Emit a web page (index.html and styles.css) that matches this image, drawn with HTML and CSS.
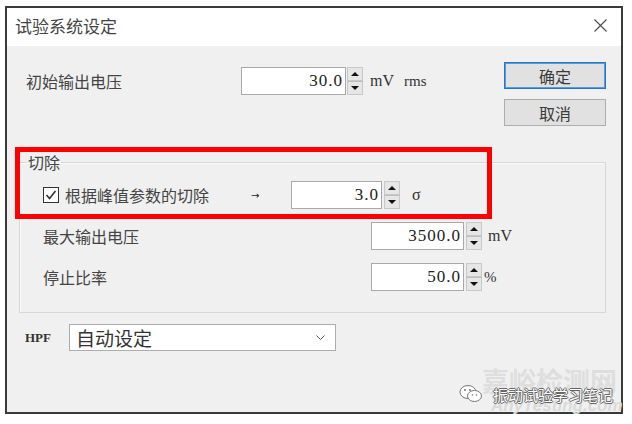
FILE: index.html
```html
<!doctype html>
<html lang="zh">
<head>
    <meta charset="utf-8">
    <title>试验系统设定</title>
    <link rel="stylesheet" href="styles.css">
</head>
<body>
    <div class="dialog">
        <div class="titlebar">
            <span class="title">试验系统设定</span>
            <svg class="close" width="13" height="13" viewBox="0 0 13 13"><path d="M0.5 0.5 L12.5 12.5 M12.5 0.5 L0.5 12.5" stroke="#4a4a4a" stroke-width="1.1" fill="none"/></svg>
        </div>

        <div class="content">
            <div class="top">
                <div class="row first">
                    <span class="label w-first">初始输出电压</span>
                    <span class="num w-first-num">30.0</span>
                    <span class="spin"><span class="up"></span><span class="down"></span></span>
                    <span class="unit">mV</span>
                    <span class="unit small">rms</span>
                </div>
                <div class="buttons">
                    <button type="button" class="btn default">确定</button>
                    <button type="button" class="btn">取消</button>
                </div>
            </div>

            <fieldset class="group">
                <legend>切除</legend>
                <div class="row">
                    <span class="lead">
                        <span class="chk"><svg width="14" height="14" viewBox="0 0 14 14"><polyline points="2.5,7 5.5,10.5 11.5,3" stroke="#333" stroke-width="1.6" fill="none"/></svg></span>
                        <span class="label chk-text">根据峰值参数的切除</span>
                        <span class="arrow">→</span>
                    </span>
                    <span class="num w-sigma">3.0</span>
                    <span class="spin gap2"><span class="up"></span><span class="down"></span></span>
                    <span class="unit sigma">σ</span>
                </div>
                <div class="row">
                    <span class="label w-inner">最大输出电压</span>
                    <span class="num w-inner-num">3500.0</span>
                    <span class="spin gap2"><span class="up"></span><span class="down"></span></span>
                    <span class="unit mv">mV</span>
                </div>
                <div class="row">
                    <span class="label w-inner">停止比率</span>
                    <span class="num w-inner-num">50.0</span>
                    <span class="spin gap2"><span class="up"></span><span class="down"></span></span>
                    <span class="unit pct">%</span>
                </div>
            </fieldset>

            <div class="row hpf">
                <span class="hpf-label">HPF</span>
                <span class="select">
                    <span>自动设定</span>
                    <svg width="9" height="5" viewBox="0 0 9 5"><polyline points="0.5,0.5 4.5,4.5 8.5,0.5" stroke="#555" stroke-width="1" fill="none"/></svg>
                </span>
            </div>
        </div>

        <!-- annotation -->
        <div class="mark"></div>

        <div class="watermark">
            <span class="wm-site">嘉峪检测网</span>
            <span class="wm-url">AnyTesting.com</span>
            <svg class="wm-icon" width="24" height="19" viewBox="0 0 24 19">
                <ellipse cx="9" cy="8" rx="8" ry="6.5" fill="#fff" stroke="#777" stroke-width="1"/>
                <ellipse cx="15.5" cy="12" rx="7" ry="5.5" fill="#fff" stroke="#777" stroke-width="1"/>
                <circle cx="6" cy="6" r="1" fill="#777"/>
                <circle cx="11" cy="6" r="1" fill="#777"/>
                <circle cx="13.5" cy="11" r="0.8" fill="#777"/>
                <circle cx="17.5" cy="11" r="0.8" fill="#777"/>
            </svg>
            <span class="wm-name">振动试验学习笔记</span>
        </div>
    </div>
</body>
</html>
```

FILE: styles.css
```css
body{
   margin: 0;
   background: #fff;
   font-family: "Noto Sans CJK SC", sans-serif;
   color: #333;
}

.dialog{
   position: relative;
   box-sizing: border-box;
   margin: 6px 0 0 5px;
   width: 618px;
   height: 408px;
   border: 2px solid #3a3a3a;
   background: #f0f0f0;
}

.titlebar{
   display: flex;
   align-items: center;
   justify-content: space-between;
   height: 38px;
   padding: 0 14px 3px 8px;
   box-sizing: border-box;
   background: #fff;
}
.title{
   font-size: 17px;
   line-height: 20px;
   color: #444;
}

.content{
   padding: 16px 15px 0 12px;
}

.top{
   display: flex;
   align-items: flex-start;
   justify-content: space-between;
}
.buttons{
   display: flex;
   flex-direction: column;
   gap: 10px;
}
.btn{
   width: 102px;
   height: 27px;
   padding: 0;
   border: 1px solid #adadad;
   background: #e1e1e1;
   font-family: "Noto Sans CJK SC", sans-serif;
   font-size: 16px;
   line-height: 20px;
   color: #3a3a3a;
}
.btn.default{
   border-color: #1f78c8;
   box-shadow: inset 0 0 0 1px #5a9ad6;
}

.row{
   display: flex;
   align-items: center;
   height: 28px;
}
.row.first{
   margin-top: 5px;
   padding-left: 7px;
}
.label{
   font-size: 16px;
   line-height: 20px;
   color: #444;
   white-space: nowrap;
}
.w-first{ width: 215px; }
.w-inner{ width: 328px; }

.num{
   box-sizing: border-box;
   height: 28px;
   padding-right: 2px;
   border: 1px solid #a9a9a9;
   background: #fff;
   font-family: "Liberation Serif", serif;
   font-size: 17px;
   line-height: 26px;
   letter-spacing: 1px;
   text-align: right;
   color: #222;
}
.w-first-num{ width: 105px; }
.w-sigma{ width: 91px; }
.w-inner-num{ width: 93px; }

.spin{
   display: flex;
   flex-direction: column;
   width: 16px;
   height: 28px;
   margin-left: 1px;
}
.spin.gap2{ margin-left: 2px; }
.spin span{
   flex: 1;
   display: flex;
   align-items: center;
   justify-content: center;
   background: #e6e6e6;
   border: 1px solid #c8c8c8;
}
.spin span + span{ border-top-color: #bdbdbd; }
.spin .up::before{
   content: "";
   border-left: 4px solid transparent;
   border-right: 4px solid transparent;
   border-bottom: 4px solid #111;
}
.spin .down::before{
   content: "";
   border-left: 4px solid transparent;
   border-right: 4px solid transparent;
   border-top: 4px solid #111;
}

.unit{
   margin-left: 7px;
   font-family: "Liberation Serif", serif;
   font-size: 16px;
   color: #333;
}
.unit.small{
   margin-left: 10px;
   font-size: 15px;
}
.unit.sigma{ margin-left: 12px; }
.unit.mv{ margin-left: 6px; }
.unit.pct{ margin-left: 2px; font-size: 15px; }

.group{
   margin: 26px 0 0;
   padding: 9px 0 21px 7px;
   min-width: 0;
   border: 1px solid #d7d7d7;
   box-shadow: inset 1px 1px 0 #fafafa;
}
.group legend{
   padding: 0 1px;
   font-size: 16px;
   line-height: 20px;
   color: #444;
}
.group .row{
   margin-left: 16px;
}
.group .row + .row{
   margin-top: 13px;
}

.lead{
   display: flex;
   align-items: center;
   width: 248px;
}
.chk{
   display: flex;
   align-items: center;
   justify-content: center;
   box-sizing: border-box;
   width: 16px;
   height: 16px;
   border: 1px solid #333;
   background: #fff;
}
.chk-text{ margin-left: 6px; }
.arrow{
   margin-left: 42px;
   font-family: "DejaVu Sans", sans-serif;
   font-size: 10px;
   color: #222;
}

.hpf{
   margin-top: 11px;
   padding-left: 6px;
   height: 27px;
}
.hpf-label{
   width: 44px;
   font-family: "Liberation Serif", serif;
   font-size: 13px;
   font-weight: bold;
   color: #333;
}
.select{
   display: flex;
   align-items: center;
   justify-content: space-between;
   box-sizing: border-box;
   width: 267px;
   height: 27px;
   padding: 0 10px 0 6px;
   border: 1px solid #adadad;
   background: #fff;
   font-size: 19px;
   line-height: 24px;
   color: #333;
}

.mark{
   position: absolute;
   left: 8px;
   top: 139px;
   width: 477px;
   height: 72px;
   box-sizing: border-box;
   border: 5px solid #f00;
}

.watermark span,
.watermark svg{
   position: absolute;
   white-space: nowrap;
}
.wm-site{
   left: 475px;
   top: 359px;
   font-size: 27px;
   line-height: 28px;
   font-weight: bold;
   color: #dedede;
}
.wm-url{
   left: 484px;
   top: 389px;
   font-family: "Liberation Sans", sans-serif;
   font-size: 17px;
   line-height: 18px;
   font-weight: bold;
   font-style: italic;
   color: #dadada;
}
.wm-icon{
   left: 452px;
   top: 376px;
}
.wm-name{
   left: 486px;
   top: 378px;
   font-size: 15px;
   line-height: 18px;
   color: #fff;
   text-shadow: 1px 0 0 #666, -1px 0 0 #666, 0 1px 0 #666, 0 -1px 0 #666;
}
```
